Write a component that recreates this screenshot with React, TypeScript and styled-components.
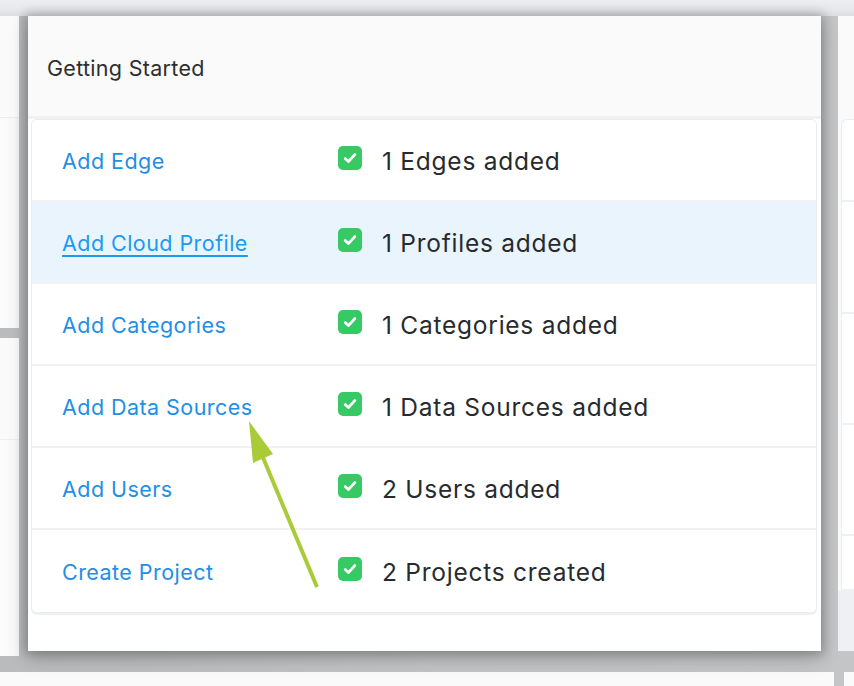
import React from "react";
import styled, { createGlobalStyle } from "styled-components";

const Global = createGlobalStyle`
  html, body { margin: 0; padding: 0; }
  body {
    background: #c5c7c9;
    font-family: "Inter", "Lato", "Liberation Sans", sans-serif;
    -webkit-font-smoothing: antialiased;
  }
`;

const Page = styled.div`
  position: relative;
  width: 854px;
  height: 686px;
  overflow: hidden;
  display: flex;
  flex-direction: column;
  background: linear-gradient(90deg, #b9bbbd 0%, #c2c4c6 50%, #c3c5c7 100%);
`;

const TopBand = styled.div`
  height: 16px;
  flex: none;
  background: linear-gradient(180deg, #eceef1 0%, #e6e8eb 60%, #dcdde0 100%);
`;

const Middle = styled.div`
  display: flex;
  align-items: flex-start;
  height: 640px;
  flex: none;
`;

const LeftColumn = styled.div`
  width: 19px;
  flex: none;
  display: flex;
  flex-direction: column;
  gap: 10px;
`;

const SidePanel = styled.div<{ $h: number }>`
  height: ${(p) => p.$h}px;
  background: #fbfbfb;
  display: flex;
  flex-direction: column;
`;

const SideHeader = styled.div`
  height: 101px;
  flex: none;
  border-bottom: 1px solid #eceef1;
  background: #fafafa;
`;

const SideBody = styled.div`
  flex: 1;
  background: linear-gradient(90deg, #fcfcfc, #f6f6f6);
`;

const MainCard = styled.div`
  position: relative;
  z-index: 2;
  margin-left: 9px;
  width: 793px;
  height: 635px;
  flex: none;
  background: #fff;
  display: flex;
  flex-direction: column;
  box-shadow: 0 0 10px 3px rgba(0, 0, 0, 0.22), 0 8px 18px rgba(0, 0, 0, 0.18);
`;

const CardHeader = styled.div`
  height: 103px;
  flex: none;
  background: #fafafa;
  border-bottom: 3px solid #eef2f5;
  display: flex;
  align-items: center;
  padding: 3px 0 0 19px;
  box-sizing: border-box;
  font-size: 21.5px;
  color: #2e2e2e;
  letter-spacing: 0.3px;
`;

const CardBody = styled.div`
  flex: 1;
  padding: 0 4px 0 3px;
  background: #fff;
`;

const TaskList = styled.div`
  border: 1px solid #e9edf1;
  border-radius: 6px;
  box-shadow: 0 2px 0 #eef1f4;
  overflow: hidden;
  background: #fff;
`;

const TaskRow = styled.div<{ $active?: boolean; $last?: boolean }>`
  height: 82px;
  box-sizing: border-box;
  display: grid;
  grid-template-columns: 276px 24px 1fr;
  align-items: center;
  padding: 1px 0 0 30px;
  background: ${(p) => (p.$active ? "#eaf4fc" : "#fff")};
  border-bottom: ${(p) => (p.$last ? "none" : "2px solid #f0f2f5")};
`;

const TaskLink = styled.a<{ $active?: boolean }>`
  font-size: 21.5px;
  color: ${(p) => (p.$active ? "#1b9af2" : "#1e8fe6")};
  text-decoration: ${(p) => (p.$active ? "underline" : "none")};
  text-underline-offset: 4px;
  text-decoration-thickness: 2px;
  cursor: pointer;
  letter-spacing: 0.45px;
  justify-self: start;
`;

const Check = styled.span`
  width: 24px;
  height: 24px;
  border-radius: 5px;
  background: #36c964;
  display: flex;
  align-items: center;
  justify-content: center;
  margin-top: -6px;
`;

const Status = styled.span`
  margin-left: 20px;
  font-size: 24.5px;
  color: #282b2e;
  letter-spacing: 0.75px;
`;

const RightPanel = styled.div`
  margin-left: 17px;
  flex: 1;
  height: 635px;
  background: #fafafa;
  display: flex;
  flex-direction: column;
`;

const RightHeader = styled.div`
  height: 103px;
  flex: none;
  background: #fafafa;
`;

const RightCard = styled.div`
  margin-left: 3px;
  border-left: 1px solid #e9edf1;
  border-top: 1px solid #e9edf1;
  border-top-left-radius: 6px;
  background: #fff;
  display: flex;
  flex-direction: column;
`;

const RightRow = styled.div<{ $h: number }>`
  height: ${(p) => p.$h}px;
  border-bottom: 2px solid #eef1f4;
  box-sizing: border-box;
`;

const RightFooter = styled.div`
  flex: 1;
  background: #eef0f3;
`;

const Bottom = styled.div`
  margin-top: 16px;
  display: flex;
  gap: 10px;
  flex: 1;
`;

const BottomPanel = styled.div<{ $w?: number }>`
  ${(p) => (p.$w ? `width: ${p.$w}px; flex: none;` : "flex: 1;")}
  background: #fafafa;
`;

const Overlay = styled.svg`
  position: absolute;
  left: 0;
  top: 0;
  z-index: 5;
  pointer-events: none;
`;

const tasks = [
  { link: "Add Edge", status: "1 Edges added" },
  { link: "Add Cloud Profile", status: "1 Profiles added", active: true },
  { link: "Add Categories", status: "1 Categories added" },
  { link: "Add Data Sources", status: "1 Data Sources added" },
  { link: "Add Users", status: "2 Users added" },
  { link: "Create Project", status: "2 Projects created" },
];

const CheckIcon = () => (
  <svg width="24" height="24" viewBox="0 0 24 24">
    <path
      d="M7.2 12.6 L10.4 15.6 L16.8 8.6"
      fill="none"
      stroke="#fff"
      strokeWidth="2.8"
      strokeLinecap="round"
      strokeLinejoin="round"
    />
  </svg>
);

export default function App() {
  return (
    <>
      <Global />
      <Page>
        <TopBand />
        <Middle>
          <LeftColumn>
            <SidePanel $h={312}>
              <SideHeader />
              <SideBody />
            </SidePanel>
            <SidePanel $h={318}>
              <SideHeader />
              <SideBody />
            </SidePanel>
          </LeftColumn>
          <MainCard>
            <CardHeader>Getting Started</CardHeader>
            <CardBody>
              <TaskList>
                {tasks.map((t, i) => (
                  <TaskRow key={t.link} $active={t.active} $last={i === tasks.length - 1}>
                    <TaskLink $active={t.active}>{t.link}</TaskLink>
                    <Check>
                      <CheckIcon />
                    </Check>
                    <Status>{t.status}</Status>
                  </TaskRow>
                ))}
              </TaskList>
            </CardBody>
          </MainCard>
          <RightPanel>
            <RightHeader />
            <RightCard>
              <RightRow $h={82} />
              <RightRow $h={112} />
              <RightRow $h={111} />
              <RightRow $h={111} />
              <RightRow $h={55} />
            </RightCard>
            <RightFooter />
          </RightPanel>
        </Middle>
        <Bottom>
          <BottomPanel $w={834} />
          <BottomPanel />
        </Bottom>
        <Overlay width="854" height="686" viewBox="0 0 854 686">
          <line x1="317" y1="587" x2="259" y2="448" stroke="#a9cb38" strokeWidth="4" />
          <polygon points="249,421 253,463 273,454" fill="#a9cb38" />
        </Overlay>
      </Page>
    </>
  );
}
